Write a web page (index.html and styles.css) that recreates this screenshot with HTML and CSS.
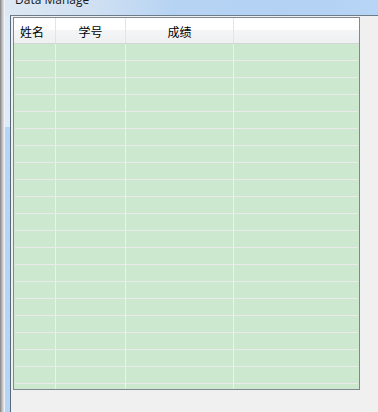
FILE: index.html
```html
<!DOCTYPE html>
<html>
<head>
<meta charset="utf-8">
<link rel="stylesheet" href="styles.css">
</head>
<body>
<div class="desk">
  <div class="edge"></div>
  <div class="win">
    <div class="title"><span>Data Manage</span></div>
    <div class="body">
      <div class="side"></div>
      <div class="client">
        <div class="list">
          <div class="head">
            <div class="hc c1">姓名</div>
            <div class="hc">学号</div>
            <div class="hc">成绩</div>
            <div class="hc c4"></div>
          </div>
          <div class="rows">
            <div class="row"><span></span><span></span><span></span><span></span></div>
            <div class="row"><span></span><span></span><span></span><span></span></div>
            <div class="row"><span></span><span></span><span></span><span></span></div>
            <div class="row"><span></span><span></span><span></span><span></span></div>
            <div class="row"><span></span><span></span><span></span><span></span></div>
            <div class="row"><span></span><span></span><span></span><span></span></div>
            <div class="row"><span></span><span></span><span></span><span></span></div>
            <div class="row"><span></span><span></span><span></span><span></span></div>
            <div class="row"><span></span><span></span><span></span><span></span></div>
            <div class="row"><span></span><span></span><span></span><span></span></div>
            <div class="row"><span></span><span></span><span></span><span></span></div>
            <div class="row"><span></span><span></span><span></span><span></span></div>
            <div class="row"><span></span><span></span><span></span><span></span></div>
            <div class="row"><span></span><span></span><span></span><span></span></div>
            <div class="row"><span></span><span></span><span></span><span></span></div>
            <div class="row"><span></span><span></span><span></span><span></span></div>
            <div class="row"><span></span><span></span><span></span><span></span></div>
            <div class="row"><span></span><span></span><span></span><span></span></div>
            <div class="row"><span></span><span></span><span></span><span></span></div>
            <div class="row"><span></span><span></span><span></span><span></span></div>
            <div class="row"><span></span><span></span><span></span><span></span></div>
          </div>
        </div>
      </div>
    </div>
  </div>
</div>
</body>
</html>
```

FILE: styles.css
```css
html, body {
  margin: 0;
  padding: 0;
}
body {
  width: 378px;
  height: 412px;
  overflow: hidden;
  background: #f0f0f0;
}
.desk {
  display: flex;
  height: 412px;
}
.edge {
  width: 5px;
  flex: none;
  background: linear-gradient(to right, #8e8e8e 0 1px, #acacac 1px 2px, #c6c6c6 2px 3px, #dadada 3px 4px, #eef2f6 4px 5px);
}
.win {
  flex: 1;
  display: flex;
  flex-direction: column;
  min-width: 0;
}
.title {
  height: 15px;
  overflow: hidden;
  padding-left: 10px;
  background: linear-gradient(to right, #dde8f3 0, #cfe0f2 90px, #b6d3f3 170px, #b3d2f4 300px, #b7d5f5 100%);
  font-family: "Open Sans", "Noto Sans", sans-serif;
  font-size: 12px;
  color: #1a1a1a;
}
.title span {
  display: block;
  margin-top: -8px;
  line-height: 16px;
}
.body {
  flex: 1;
  display: flex;
}
.side {
  width: 5px;
  flex: none;
  background: linear-gradient(to bottom, #deebf9 0, #deebf9 112px, #b5d5f7 112px, #b5d5f7 100%);
}
.client {
  flex: 1;
  border-left: 1px solid #56687a;
  border-top: 1px solid #6e7c89;
  background: #f0f0f0;
  padding: 1px 0 0 2px;
}
.list {
  width: 343px;
  height: 371px;
  padding: 0 1px;
  border: 1px solid #828790;
  background: #cce8cf;
  overflow: hidden;
}
.head {
  display: grid;
  grid-template-columns: 41px 70px 108px 1fr;
  height: 26px;
  box-sizing: border-box;
  margin: 0 -1px;
  padding: 0 1px;
  border-bottom: 1px solid #d5d5d5;
  background: linear-gradient(to bottom, #ffffff 0, #ffffff 12px, #f4f5f7 12px, #eff0f2 100%);
}
.hc {
  border-right: 1px solid #e1e4e8;
  font-family: "Noto Sans CJK SC", "Noto Sans", sans-serif;
  font-size: 12px;
  color: #000;
  line-height: 23px;
  padding-top: 2px;
  text-align: center;
}
.hc.c1 {
  text-align: left;
  padding-left: 5px;
}
.hc.c4 {
  border-right: none;
}
.row {
  display: grid;
  grid-template-columns: 41px 70px 108px 1fr;
  height: 17px;
  box-sizing: border-box;
  border-bottom: 1px solid #e9ebea;
}
.row span {
  border-right: 1px solid #eef0ef;
}
.row span:last-child {
  border-right: none;
}
```
